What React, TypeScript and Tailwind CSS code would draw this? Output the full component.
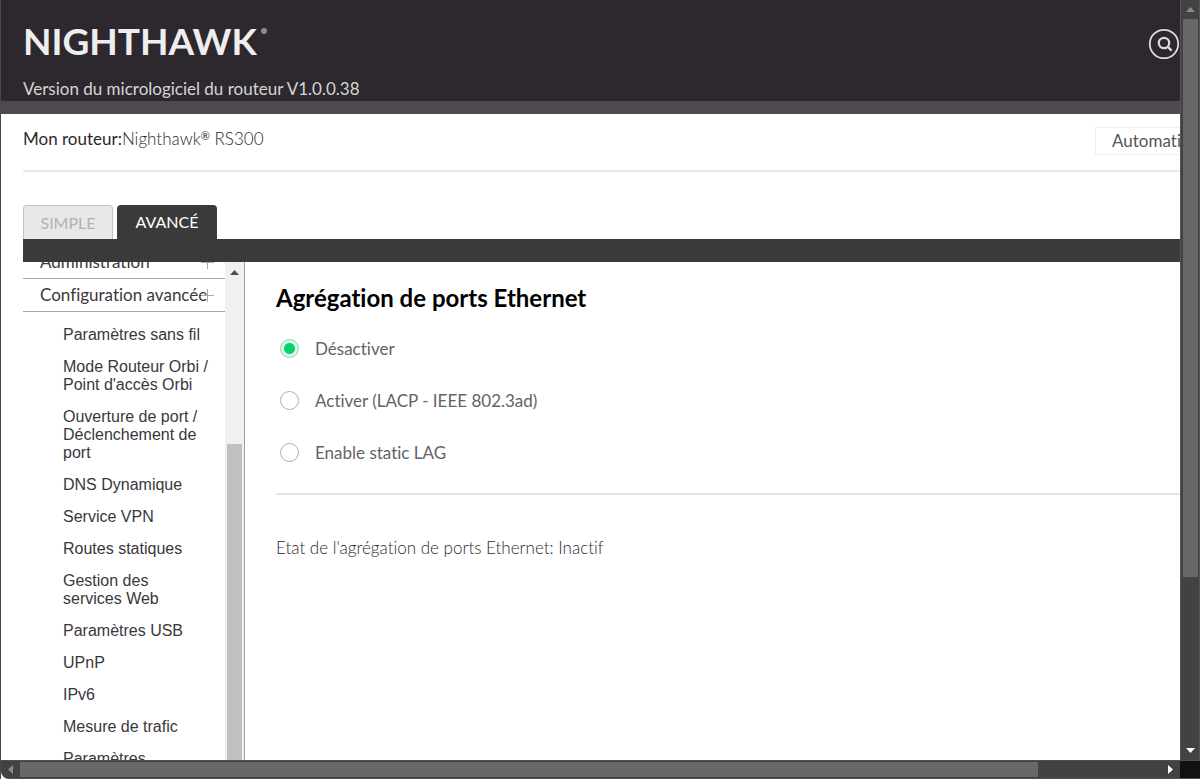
import { useState } from "react";

const advancedItems = [
  "Paramètres sans fil",
  "Mode Routeur Orbi / Point d'accès Orbi",
  "Ouverture de port / Déclenchement de port",
  "DNS Dynamique",
  "Service VPN",
  "Routes statiques",
  "Gestion des services Web",
  "Paramètres USB",
  "UPnP",
  "IPv6",
  "Mesure de trafic",
  "Paramètres",
];

const modes = ["Désactiver", "Activer (LACP - IEEE 802.3ad)", "Enable static LAG"];

function SearchIcon() {
  return (
    <svg viewBox="0 0 32 32" className="size-8" fill="none" stroke="#dcdadd">
      <circle cx="16" cy="16" r="14.2" strokeWidth="1.8" />
      <circle cx="16" cy="15" r="5.2" strokeWidth="2.2" />
      <path d="M19.6 18.6 L23.6 22.6" strokeWidth="2.4" />
    </svg>
  );
}

function Header() {
  return (
    <header className="flex h-[114px] shrink-0 items-start justify-between border-b-[13px] border-[#4f4a4f] bg-[#2d282e] pl-[22px]">
      <div>
        <div className="flex h-[78px] items-center pt-1 text-[37px] leading-[38px] font-bold text-[#efeeef]">
          NIGHTHAWK
          <span className="mt-6 ml-1 size-[6px] self-start rounded-full bg-[#8f8c90]" />
        </div>
        <p className="text-[17px] leading-[22px] text-[#d6d5d6]">
          Version du micrologiciel du routeur V1.0.0.38
        </p>
      </div>
      <button type="button" aria-label="Rechercher" className="mt-7">
        <SearchIcon />
      </button>
    </header>
  );
}

function RouterBar() {
  return (
    <div className="ml-[22px] flex h-[58px] shrink-0 items-start justify-between border-b-2 border-[#e9e9e9]">
      <p className="pt-3 text-[17px] leading-[26px] font-light text-[#2d282e]">
        <span className="font-normal">Mon routeur:</span>
        Nighthawk<sup className="text-[11px] font-normal">®</sup> RS300
      </p>
      <div className="mt-[13px] w-[85px] overflow-hidden">
        <select
          aria-label="Langue"
          className="h-7 w-[150px] appearance-none border border-[#efefef] bg-white pl-4 text-[17px] text-[#57545a]"
        >
          <option>Automatique</option>
        </select>
      </div>
    </div>
  );
}

function Tabs() {
  return (
    <div className="ml-[22px] mt-[33px] shrink-0">
      <div className="flex gap-1">
        <button
          type="button"
          className="h-[34px] w-[90px] rounded-t-[4px] border border-b-0 border-[#c4c4c4] bg-[#e8e8e8] text-[16px] text-[#b2b2b2]"
        >
          SIMPLE
        </button>
        <button
          type="button"
          className="h-[34px] w-[100px] rounded-t-[4px] bg-[#3a3a3a] text-[16px] text-white"
        >
          AVANCÉ
        </button>
      </div>
      <div className="h-[23px] bg-[#3a3a3a]" />
    </div>
  );
}

function PlusIcon() {
  return (
    <svg viewBox="0 0 13 13" className="size-[13px] shrink-0" stroke="#a9a9a9" fill="none">
      <path d="M6.5 0 V13 M0 6.5 H13" />
    </svg>
  );
}

function Section({ label }: { label: string }) {
  return (
    <button
      type="button"
      className="flex h-[33px] w-full items-center justify-between border-b border-[#a6a6a6] pl-[17px] pr-[11px] text-[17px] text-[#3c393e]"
    >
      <span className="w-40 whitespace-nowrap text-left">{label}</span>
      <PlusIcon />
    </button>
  );
}

function Sidebar() {
  return (
    <div className="flex w-[222px] shrink-0 border-r border-[#a0a0a0]">
      <nav className="w-[202px] overflow-hidden">
        <div className="-mt-4">
          <Section label="Administration" />
          <Section label="Configuration avancée" />
          <ul className="flex flex-col gap-[14px] pl-10 pr-4 pt-[14px] font-['Liberation_Sans',sans-serif] text-[16px] leading-[18px] text-[#3a373b]">
            {advancedItems.map((item) => (
              <li key={item}>
                <a href="#">{item}</a>
              </li>
            ))}
          </ul>
        </div>
      </nav>
      <div aria-hidden="true" className="flex flex-1 flex-col items-center bg-[#f0f0f0]">
        <svg viewBox="0 0 9 5" className="mt-2 h-[5px] w-[9px]">
          <path d="M0 5 L4.5 0 L9 5 Z" fill="#505050" />
        </svg>
        <div className="mt-[169px] w-[15px] flex-1 bg-[#c0c0c0]" />
      </div>
    </div>
  );
}

function Content() {
  const [mode, setMode] = useState(modes[0]);
  return (
    <main className="min-w-0 flex-1 pl-[31px] pt-5">
      <h1 className="text-[24px] leading-8 font-bold text-black">Agrégation de ports Ethernet</h1>
      <fieldset aria-label="Mode" className="border-b-2 border-[#e3e8e7] pb-[15px] pt-2">
        {modes.map((label) => (
          <label
            key={label}
            className="flex h-[52px] items-center gap-4 pl-1 text-[17px] text-[#656268]"
          >
            <input
              type="radio"
              name="lag"
              checked={mode === label}
              onChange={() => setMode(label)}
              className="size-[19px] appearance-none rounded-full border border-[#b0b0b0] bg-white checked:border-[#7fe0ae] checked:bg-[radial-gradient(circle,#00d66c_5px,#e6f3ec_6px)]"
            />
            <span className="pt-[2px]">{label}</span>
          </label>
        ))}
      </fieldset>
      <p className="pt-10 text-[17px] leading-[26px] font-light text-[#2d282e]">
        Etat de l'agrégation de ports Ethernet: Inactif
      </p>
    </main>
  );
}

function VerticalScrollbar() {
  return (
    <div aria-hidden="true" className="flex w-5 shrink-0 flex-col items-center border-x border-[#565656] bg-[#424242]">
      <div className="flex h-[19px] items-center">
        <svg viewBox="0 0 9 5" className="h-[5px] w-[9px]">
          <path d="M0 5 L4.5 0 L9 5 Z" fill="#8a8a8a" />
        </svg>
      </div>
      <div className="w-[15px] flex-[558] bg-[#686868]" />
      <div className="flex-[164]" />
      <div className="flex h-[19px] items-center">
        <svg viewBox="0 0 9 5" className="h-[5px] w-[9px]">
          <path d="M0 0 L4.5 5 L9 0 Z" fill="#fff" />
        </svg>
      </div>
    </div>
  );
}

function HorizontalScrollbar() {
  return (
    <div aria-hidden="true" className="flex h-[19px] shrink-0 items-center overflow-hidden rounded-bl-lg border-y border-[#505050] bg-[#424242]">
      <div className="flex w-[19px] justify-center">
        <svg viewBox="0 0 5 9" className="h-[9px] w-[5px]">
          <path d="M5 0 L0 4.5 L5 9 Z" fill="#8a8a8a" />
        </svg>
      </div>
      <div className="h-[15px] flex-[1018] bg-[#686868]" />
      <div className="flex-[123]" />
      <div className="flex w-[19px] justify-center">
        <svg viewBox="0 0 5 9" className="h-[9px] w-[5px]">
          <path d="M0 0 L5 4.5 L0 9 Z" fill="#fff" />
        </svg>
      </div>
      <div className="h-full w-5 bg-[#111]" />
    </div>
  );
}

export default function App() {
  return (
    <div className="flex h-screen flex-col overflow-hidden border-l border-[#3f4a60] bg-white font-[Lato,sans-serif] [font-variant-ligatures:none]">
      <div className="flex min-h-0 flex-1">
        <div className="flex min-w-0 flex-1 flex-col">
          <Header />
          <RouterBar />
          <Tabs />
          <div className="flex min-h-0 flex-1 pl-[22px]">
            <Sidebar />
            <Content />
          </div>
        </div>
        <VerticalScrollbar />
      </div>
      <HorizontalScrollbar />
    </div>
  );
}
